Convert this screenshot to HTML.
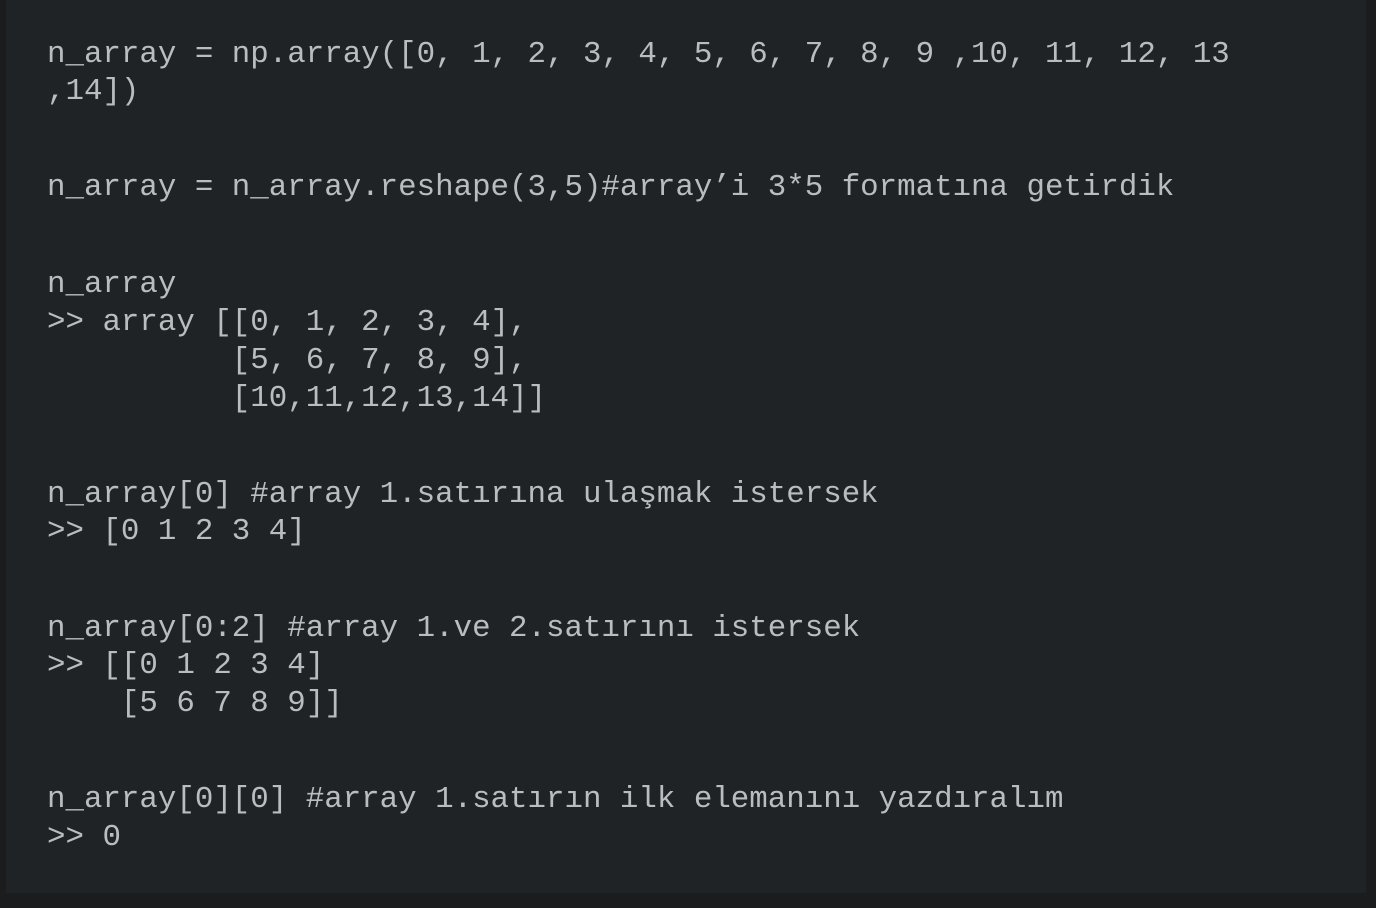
<!DOCTYPE html>
<html><head><meta charset="utf-8"><style>
html,body{margin:0;padding:0;background:#1b1c1e;width:1376px;height:908px;overflow:hidden}
.box{position:absolute;left:6px;top:0;width:1360px;height:893px;background:#202325}
.l{position:absolute;left:47px;margin:0;font-family:"Liberation Mono","Courier New",monospace;font-size:30.8px;line-height:38px;color:#babdbf;white-space:pre}
</style></head><body>
<div class="box"></div>
<pre class="l" style="top:36px">n_array = np.array([0, 1, 2, 3, 4, 5, 6, 7, 8, 9 ,10, 11, 12, 13</pre>
<pre class="l" style="top:73px">,14])</pre>
<pre class="l" style="top:169px">n_array = n_array.reshape(3,5)#array’i 3*5 formatına getirdik</pre>
<pre class="l" style="top:266px">n_array</pre>
<pre class="l" style="top:304px">&gt;&gt; array [[0, 1, 2, 3, 4],</pre>
<pre class="l" style="top:342px">          [5, 6, 7, 8, 9],</pre>
<pre class="l" style="top:380px">          [10,11,12,13,14]]</pre>
<pre class="l" style="top:476px">n_array[0] #array 1.satırına ulaşmak istersek</pre>
<pre class="l" style="top:513px">&gt;&gt; [0 1 2 3 4]</pre>
<pre class="l" style="top:610px">n_array[0:2] #array 1.ve 2.satırını istersek</pre>
<pre class="l" style="top:647px">&gt;&gt; [[0 1 2 3 4]</pre>
<pre class="l" style="top:685px">    [5 6 7 8 9]]</pre>
<pre class="l" style="top:781px">n_array[0][0] #array 1.satırın ilk elemanını yazdıralım</pre>
<pre class="l" style="top:819px">&gt;&gt; 0</pre>
</body></html>
